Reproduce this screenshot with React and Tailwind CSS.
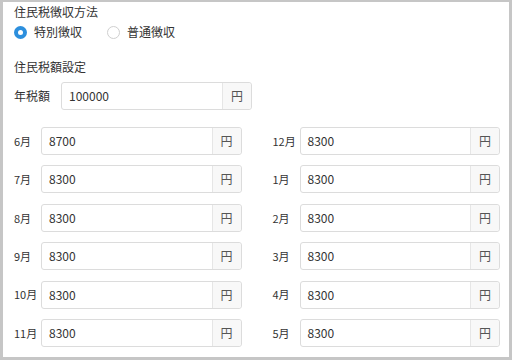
import React, { useState } from "react";

const left = [
  ["6月", "8700"],
  ["7月", "8300"],
  ["8月", "8300"],
  ["9月", "8300"],
  ["10月", "8300"],
  ["11月", "8300"],
];
const right = [
  ["12月", "8300"],
  ["1月", "8300"],
  ["2月", "8300"],
  ["3月", "8300"],
  ["4月", "8300"],
  ["5月", "8300"],
];

const YenInput = ({ value, className }) => (
  <div className={`flex h-[28px] rounded-[3px] border border-[#dcdcdc] bg-white ${className}`}>
    <div className="flex flex-1 items-center pl-[7px] text-[12px] text-[#333]">{value}</div>
    <div className="flex w-[29px] items-center justify-center rounded-r-[3px] border-l border-[#e6e6e6] bg-[#f8f8f8] text-[12px] text-[#555]">
      円
    </div>
  </div>
);

const Radio = ({ checked, label, onClick }) => (
  <button onClick={onClick} className="flex items-center gap-[7px]">
    <span
      className={`flex h-[13px] w-[13px] items-center justify-center rounded-full ${
        checked ? "bg-[#2d8fdd]" : "border border-[#cfcfcf] bg-white"
      }`}
    >
      {checked && <span className="h-[5px] w-[5px] rounded-full bg-white" />}
    </span>
    <span className="text-[12px] leading-[18px] text-[#333]">{label}</span>
  </button>
);

const MonthColumn = ({ rows }) => (
  <div className="flex flex-col gap-[10.4px]">
    {rows.map(([m, v]) => (
      <div key={m} className="flex items-center">
        <div className="w-[27px] text-[11px] text-[#333]">{m}</div>
        <YenInput value={v} className="flex-1" />
      </div>
    ))}
  </div>
);

export default function App() {
  const [method, setMethod] = useState("special");

  return (
    <div
      className="h-[360px] w-[512px] border-x-[3px] border-t-2 border-b-[3px] border-[#c6c6c6] bg-white"
      style={{ fontFamily: '"Noto Sans CJK JP", "Noto Sans", sans-serif' }}
    >
      <div className="pl-[11px] pr-[9px] pt-[1px]">
        {/* 徴収方法 */}
        <div className="text-[12px] leading-[18px] text-[#333]">住民税徴収方法</div>
        <div className="mt-[2px] flex items-center gap-[25px]">
          <Radio checked={method === "special"} label="特別徴収" onClick={() => setMethod("special")} />
          <Radio checked={method === "normal"} label="普通徴収" onClick={() => setMethod("normal")} />
        </div>

        {/* 税額設定 */}
        <div className="mt-[17px] text-[12px] leading-[18px] text-[#333]">住民税額設定</div>
        <div className="mt-[6px] flex items-center">
          <div className="w-[47px] text-[12px] text-[#333]">年税額</div>
          <YenInput value="100000" className="w-[191px]" />
        </div>

        <div className="mt-[17px] grid grid-cols-2 gap-x-[31px]">
          <MonthColumn rows={left} />
          <MonthColumn rows={right} />
        </div>
      </div>
    </div>
  );
}
